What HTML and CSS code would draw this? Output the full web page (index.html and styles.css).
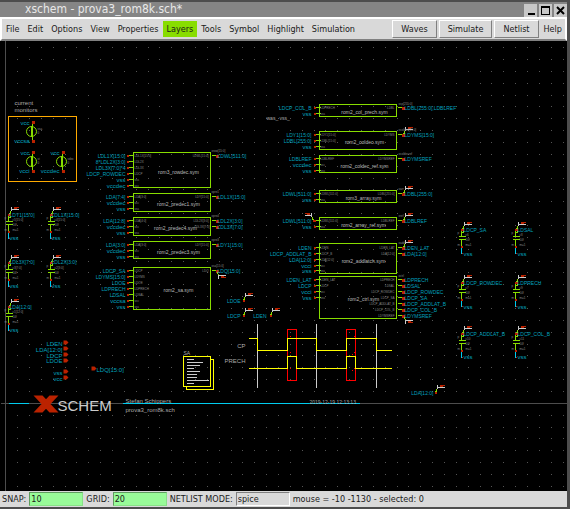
FILE: index.html
```html
<!DOCTYPE html>
<html lang="en">
<head>
<meta charset="utf-8">
<title>xschem - prova3_rom8k.sch*</title>
<link rel="stylesheet" href="styles.css">
</head>
<body>
<header class="titlebar">
  <h1 class="title">xschem - prova3_rom8k.sch*</h1>
  <div class="controls">
    <button class="control" type="button" aria-label="Minimize"><svg class="glyph" viewBox="0 0 13 13"><path d="M4 10h7" stroke-width="2"/></svg></button>
    <button class="control" type="button" aria-label="Maximize"><svg class="glyph" viewBox="0 0 13 13"><path d="M2.500 3v7.500h8V3"/><path d="M2 3h9" stroke-width="2"/></svg></button>
    <button class="control" type="button" aria-label="Close"><svg class="glyph glyph-x" viewBox="0 0 13 13"><path d="M3 3l7 7M10 3l-7 7" stroke-width="2"/></svg></button>
  </div>
</header>
<nav class="menubar">
  <button class="menu" type="button">File</button>
  <button class="menu" type="button">Edit</button>
  <button class="menu" type="button">Options</button>
  <button class="menu" type="button">View</button>
  <button class="menu" type="button">Properties</button>
  <button class="menu layers" type="button">Layers</button>
  <button class="menu" type="button">Tools</button>
  <button class="menu" type="button">Symbol</button>
  <button class="menu" type="button">Highlight</button>
  <button class="menu" type="button">Simulation</button>
  <span class="spacer"></span>
  <button class="action" type="button">Waves</button>
  <button class="action" type="button">Simulate</button>
  <button class="action" type="button">Netlist</button>
  <button class="menu help" type="button">Help</button>
</nav>
<main class="canvas">
<svg class="sheet" role="img" aria-label="Schematic">
  <defs>
    <pattern id="grid" x="17" y="6" width="83" height="83" patternUnits="userSpaceOnUse">
      <path class="dots" d="M0 .5h83M0 12.500h83M0 24.500h83M0 36.500h83M0 48.500h83M0 59.500h83M0 71.500h83"/>
    </pattern>
    <g id="in"><path class="wire" d="M0 0h5"/><rect class="pin" x="-2" y="-1" width="2" height="2"/></g>
    <g id="out"><path class="wire" d="M0 0h4"/><rect class="pin" x="4" y="-1" width="3" height="3"/></g>
    <g id="flag"><path class="wire" d="M0 0v-1h1v-2l2-2"/><path class="tick" d="M2-8v4M2-5h7"/><path class="pinline" d="M4-6h3M4-7h5"/><rect class="pin" x="-1" y="-1" width="2" height="2"/></g>
    <g id="cap">
      <use href="#flag"/>
      <path class="wire" d="M-1 0v7M-4 7h7M-4 10h7M-1 10v7M1 1v2h-2"/>
      <path class="net" d="M-1 18v6"/>
      <path class="pinline" d="M-1 24h1"/>
      <rect class="pin" x="-2" y="-1" width="2" height="2"/><rect class="pin" x="-2" y="16" width="2" height="2"/>
      <g class="tiny"><text x="-5" y="4">p</text><text x="-5" y="16">m</text><text x="3" y="11">50f</text><text x="3" y="16">m=1</text></g>
    </g>
    <g id="source">
      <circle class="wire smooth" cx="-1" cy="9" r="5"/><path class="wire" d="M0 0v18M-1 3v11"/>
      <rect class="pin" x="-1" y="-2" width="3" height="3"/><rect class="pin" x="-1" y="17" width="3" height="3"/>
      <g class="tiny"><text x="5" y="11">0</text></g>
    </g>
    <path id="port" class="pin smooth" d="M0-2h3l2 2-2 2H0z"/>
  </defs>
  <rect x="0" y="0" width="100%" height="100%" fill="url(#grid)"/>
  <g transform="translate(.5 -40.500)">
    <!-- sheet axes and title block -->
    <path class="axis" d="M5 0v2000M0 403h4000"/>
    <path class="net" d="M8 403h20M122 403h237"/>
    <path class="emblem" d="M33 395h9l16 17h-9zM49 395h9l-16 17h-9z"/>
    <text class="brand" x="57" y="410">SCHEM</text>
    <g class="note">
      <text x="125" y="402">Stefan Schippers</text>
      <text x="125" y="411">prova3_rom8k.sch</text>
      <text x="14" y="104">current</text>
      <text x="14" y="111">monitors</text>
      <text x="183" y="354" class="small">SA</text>
      <text x="309" y="403" class="small">2019-12-19 12:13:13</text>
      <text x="266" y="119" class="small">was_ vss_</text>
      <text x="245" y="347" class="end">CP</text>
      <text x="245" y="362" class="end">PRECH</text>
    </g>

    <!-- current monitors -->
    <rect class="frame" x="8" y="116" width="68" height="65"/>
    <use href="#source" x="32" y="122"/><use href="#source" x="32" y="152"/><use href="#source" x="62" y="152"/>
    <g class="label large end">
      <text x="29" y="124">vcc</text><text x="29" y="142">vccsa</text>
      <text x="29" y="154">vcc</text><text x="29" y="172">vcci</text>
      <text x="59" y="154">vcc</text><text x="59" y="172">vccdec</text>
    </g>
    <g class="tiny"><text x="37" y="129">vsa</text><text x="37" y="159">vi</text><text x="67" y="159">vdec</text></g>

    <!-- row decoder, predecoders and sense amplifier -->
    <path class="wire" d="M133 152h77v35h-77zM133 193h77v18h-77zM133 217h77v18h-77zM133 241h77v17h-77zM133 267h77v42h-77z"/>
    <use href="#in" x="128" y="155"/><use href="#in" x="128" y="161"/><use href="#in" x="128" y="167"/><use href="#in" x="128" y="173"/><use href="#in" x="128" y="179"/><use href="#in" x="128" y="185"/>
    <use href="#in" x="128" y="196"/><use href="#in" x="128" y="202"/><use href="#in" x="128" y="208"/>
    <use href="#in" x="128" y="220"/><use href="#in" x="128" y="226"/><use href="#in" x="128" y="232"/>
    <use href="#in" x="128" y="244"/><use href="#in" x="128" y="250"/><use href="#in" x="128" y="256"/>
    <use href="#in" x="128" y="270"/><use href="#in" x="128" y="276"/><use href="#in" x="128" y="282"/><use href="#in" x="128" y="288"/><use href="#in" x="128" y="294"/><use href="#in" x="128" y="300"/><use href="#in" x="128" y="306"/>
    <use href="#out" x="211" y="155"/><use href="#out" x="211" y="196"/><use href="#out" x="211" y="220"/><use href="#out" x="211" y="226"/><use href="#out" x="211" y="244"/><use href="#out" x="211" y="270"/>
    <use href="#flag" transform="translate(216 270) scale(1 -1)"/>
    <g class="label end">
      <text x="125" y="157">LDL1X[15:0]</text><text x="125" y="163">8*LDL2X[3:0]</text><text x="125" y="169">LDL3X[7:0]*4</text><text x="125" y="175">LDCP_ROWDEC</text>
      <text x="125" y="198">LDA[7:4]</text><text x="125" y="222">LDA[12:8]</text><text x="125" y="246">LDA[3:0]</text>
      <text x="125" y="272">LDCP_SA</text><text x="125" y="278">LDYMS[15:0]</text><text x="125" y="284">LDOE</text><text x="125" y="290">LDPRECH</text><text x="125" y="296">LDSAL</text>
    </g>
    <g class="label large end">
      <text x="125" y="181">vss</text><text x="125" y="187">vccdec</text>
      <text x="125" y="204">vccdec</text><text x="125" y="210">vss</text>
      <text x="125" y="228">vccdec</text><text x="125" y="234">vss</text>
      <text x="125" y="252">vccdec</text><text x="125" y="258">vss</text>
      <text x="125" y="302">vccsa</text><text x="125" y="308">vss</text>
    </g>
    <g class="label">
      <text x="217" y="157">LDWL[511:0]</text><text x="217" y="198">LDL1X[15:0]</text><text x="217" y="222">LDL2X[3:0]</text><text x="217" y="228">LDL3X[7:0]</text><text x="217" y="246">LDY1[15:0]</text><text x="217" y="272">LDQ[15:0]</text>
    </g>
    <g class="cell">
      <text x="178" y="173">rom3_rowdec.sym</text><text x="178" y="205">rom2_predec1.sym</text><text x="175" y="229">rom2_predec4.sym</text><text x="178" y="253">rom2_predec3.sym</text><text x="178" y="291">rom2_sa.sym</text>
    </g>
    <g class="tiny">
      <text x="134" y="156">LDL1X[15:0]</text><text x="134" y="162">LDL2X</text><text x="134" y="168">LDL3X</text><text x="134" y="174">LDCP</text><text x="134" y="180">vss</text><text x="134" y="186">vcc</text>
      <text x="134" y="197">LDA[3:0]</text><text x="134" y="203">vcc</text><text x="134" y="209">vss</text>
      <text x="134" y="221">LDA[4:0]</text><text x="134" y="227">vcc</text><text x="134" y="233">vss</text>
      <text x="134" y="245">LDA[3:0]</text><text x="134" y="251">vcc</text><text x="134" y="257">vss</text>
      <text x="134" y="271">LDCP</text><text x="134" y="277">LDYMS</text><text x="134" y="283">LDOE</text><text x="134" y="289">LDPRECH</text><text x="134" y="295">LDSAL</text><text x="134" y="301">vcc</text><text x="134" y="307">vss</text>
      <text x="211" y="151">xrow[15:0]</text><text x="211" y="192">xpre1</text><text x="211" y="216">xpre4</text><text x="211" y="240">xpre3</text><text x="211" y="266">xsa[15:0]</text>
    </g>
    <g class="tiny end">
      <text x="208" y="156">LDWL[15:0]</text><text x="208" y="197">LDY[15:0]</text><text x="208" y="221">LDL2X[3:0]</text><text x="209" y="227">LDL3X[7:0]</text><text x="208" y="245">LDY[15:0]</text><text x="208" y="271">LDQ</text>
    </g>

    <!-- column path, array and control -->
    <path class="wire" d="M319 104h77v12h-77zM319 131h77v18h-77zM319 155h77v17h-77zM319 190h77v12h-77zM319 217h77v12h-77zM319 243h77v30h-77zM319 276h77v42h-77z"/>
    <use href="#in" x="315" y="107"/><use href="#in" x="315" y="113"/>
    <use href="#in" x="315" y="134"/><use href="#in" x="315" y="140"/><use href="#in" x="315" y="146"/>
    <use href="#in" x="315" y="158"/><use href="#in" x="315" y="164"/><use href="#in" x="315" y="170"/>
    <use href="#in" x="315" y="193"/><use href="#in" x="315" y="199"/>
    <use href="#in" x="315" y="220"/><use href="#in" x="315" y="226"/>
    <use href="#in" x="315" y="247"/><use href="#in" x="315" y="253"/><use href="#in" x="315" y="259"/><use href="#in" x="315" y="265"/><use href="#in" x="315" y="270"/>
    <use href="#in" x="315" y="279"/><use href="#in" x="315" y="285"/><use href="#in" x="315" y="291"/><use href="#in" x="315" y="297"/>
    <use href="#out" x="397" y="107"/><use href="#out" x="397" y="134"/><use href="#out" x="397" y="158"/><use href="#out" x="397" y="193"/><use href="#out" x="397" y="220"/><use href="#out" x="397" y="247"/><use href="#out" x="397" y="253"/>
    <use href="#out" x="397" y="279"/><use href="#out" x="397" y="285"/><use href="#out" x="397" y="291"/><use href="#out" x="397" y="297"/><use href="#out" x="397" y="303"/><use href="#out" x="397" y="309"/><use href="#out" x="397" y="315"/>
    <use href="#flag" x="403" y="134"/><use href="#flag" x="403" y="193"/><use href="#flag" x="403" y="220"/><use href="#flag" x="403" y="247"/>
    <use href="#flag" transform="translate(403 315) scale(1 -1)"/><use href="#flag" transform="translate(313 220) scale(-1 1)"/>
    <g class="label end">
      <text x="311" y="109">LDCP_COL_B</text>
      <text x="311" y="136">LDY1[15:0]</text><text x="311" y="142">LDBL[255:0]</text>
      <text x="311" y="160">LDBLREF</text><text x="311" y="195">LDWL[511:0]</text><text x="311" y="222">LDWL[511:0]</text>
      <text x="311" y="249">LDEN</text><text x="311" y="255">LDCP_ADDLAT_B</text><text x="311" y="261">LDA[12:0]</text>
      <text x="311" y="281">LDEN_LAT</text><text x="311" y="287">LDCP</text>
    </g>
    <g class="label large end">
      <text x="311" y="115">vss</text><text x="311" y="148">vss</text><text x="311" y="166">vccdec</text><text x="311" y="172">vss</text><text x="311" y="201">vss</text><text x="311" y="228">vss</text><text x="311" y="267">vcci</text><text x="311" y="272">vss</text><text x="311" y="293">vcci</text><text x="311" y="299">vss</text>
    </g>
    <g class="label">
      <text x="404" y="109">LDBL[255:0],LDBLREF</text><text x="404" y="136">LDYMS[15:0]</text><text x="404" y="160">LDYMSREF</text><text x="404" y="195">LDBL[255:0]</text><text x="404" y="222">LDBLREF</text>
      <text x="404" y="249">LDEN_LAT</text><text x="404" y="255">LDA[12:0]</text>
      <text x="404" y="281">LDPRECH</text><text x="404" y="287">LDSAL</text><text x="404" y="293">LDCP_ROWDEC</text><text x="404" y="299">LDCP_SA</text><text x="404" y="305">LDCP_ADDLAT_B</text><text x="404" y="311">LDCP_COL_B</text><text x="404" y="317">LDYMSREF</text>
    </g>
    <g class="cell">
      <text x="364" y="113">rom2_col_prech.sym</text><text x="364" y="143">rom2_coldec.sym</text><text x="364" y="167">rom2_coldec_ref.sym</text><text x="363" y="199">rom3_array.sym</text><text x="363" y="226">rom2_array_ref.sym</text><text x="363" y="262">rom2_addlatch.sym</text><text x="363" y="300">rom2_ctrl.sym</text>
    </g>
    <g class="tiny">
      <text x="320" y="108">LDPRECH</text><text x="320" y="114">vss</text>
      <text x="320" y="135">LDY1[15:0]</text><text x="320" y="141">LDBL[15:0]</text><text x="320" y="147">vss</text>
      <text x="320" y="159">LDBLREF</text><text x="320" y="165">vcc</text><text x="320" y="171">vss</text>
      <text x="320" y="194">LDWL[511:0]</text><text x="320" y="200">vss</text>
      <text x="320" y="221">LDWL[511:0]</text><text x="320" y="227">vss</text>
      <text x="320" y="248">LDEN</text><text x="320" y="254">LDCP_B</text><text x="320" y="260">LDA[12:0]</text><text x="320" y="266">vcc</text><text x="320" y="271">vss</text>
      <text x="320" y="280">LDEN_LAT</text><text x="320" y="286">LDCP</text><text x="320" y="292">vcc</text><text x="320" y="298">vss</text>
      <text x="398" y="104">xcp[255:0]</text><text x="398" y="130">xcoldec[15:0]</text><text x="398" y="154">xcoldecref</text><text x="398" y="189">xarr</text><text x="398" y="216">xref</text><text x="398" y="243">xadd</text><text x="398" y="276">xctrl</text>
    </g>
    <g class="tiny end">
      <text x="394" y="108">LDBL</text><text x="394" y="135">LDYMS</text><text x="394" y="159">LDYMSREF</text><text x="394" y="194">LDBL[255:0]</text><text x="394" y="221">LDBLREF</text><text x="394" y="248">LDEN_LAT</text><text x="394" y="254">LDA[12:0]</text>
      <text x="394" y="280">LDPRECH</text><text x="394" y="286">LDSAL</text><text x="394" y="292">LDCP_ROWDEC</text><text x="394" y="298">LDCP_SA</text><text x="394" y="304">LDCP_ADDLAT_B</text><text x="394" y="310">LDCP_COL_B</text><text x="394" y="316">LDYMSREF</text>
    </g>

    <!-- load capacitors -->
    <use href="#cap" x="9" y="214"/><use href="#cap" x="51" y="214"/><use href="#cap" x="9" y="262"/><use href="#cap" x="51" y="262"/><use href="#cap" x="9" y="306"/>
    <use href="#cap" x="462" y="229"/><use href="#cap" x="516" y="229"/><use href="#cap" x="462" y="282"/><use href="#cap" x="516" y="282"/><use href="#cap" x="462" y="333"/><use href="#cap" x="516" y="333"/>
    <g class="label">
      <text x="9" y="216">LDY1[15:0]</text><text x="51" y="216">LDL1X[15:0]</text><text x="9" y="263">LDL3X[7:0]</text><text x="51" y="263">LDL2X[3:0]</text><text x="9" y="308">LDA[12:0]</text>
      <text x="463" y="231">LDCP_SA</text><text x="517" y="231">LDSAL</text><text x="463" y="284">LDCP_ROWDEC</text><text x="517" y="284">LDPRECH</text><text x="463" y="335">LDCP_ADDLAT_B</text><text x="517" y="335">LDCP_COL_B</text>
    </g>
    <g class="label large">
      <text x="9" y="239">vss</text><text x="51" y="239">vss</text><text x="9" y="287">vss</text><text x="51" y="287">vss</text><text x="9" y="331">vss</text>
      <text x="463" y="255">vss</text><text x="517" y="255">vss</text><text x="463" y="308">vss</text><text x="517" y="308">vss</text><text x="463" y="358">vss</text><text x="517" y="358">vss</text>
    </g>
    <g class="tiny">
      <text x="12" y="220">c5[15:0]</text><text x="54" y="220">c4[15:0]</text><text x="12" y="268">c3[7:0]</text><text x="54" y="268">c2[3:0]</text><text x="12" y="312">c1[12:0]</text>
      <text x="465" y="235">c6</text><text x="519" y="235">c8</text><text x="465" y="288">c7</text><text x="519" y="288">c9</text><text x="465" y="339">c10</text><text x="519" y="339">c11</text>
    </g>

    <!-- probes and ports -->
    <use href="#flag" x="243" y="300"/><use href="#flag" x="243" y="315"/><use href="#flag" x="270" y="315"/><use href="#flag" x="435" y="392"/>
    <g class="label end">
      <text x="240" y="302">LDOE</text><text x="240" y="317">LDCP</text><text x="266" y="317">LDEN</text><text x="433" y="394">LDA[12:0]</text>
    </g>
    <use href="#port" x="63" y="342"/><use href="#port" x="63" y="348"/><use href="#port" x="63" y="354"/><use href="#port" x="63" y="360"/><use href="#port" x="63" y="371"/><use href="#port" x="63" y="377"/>
    <use href="#port" x="91" y="368"/>
    <g class="label large end">
      <text x="62" y="345">LDEN</text><text x="62" y="351">LDA[12:0]</text><text x="62" y="357">LDCP</text><text x="62" y="362">LDOE</text><text x="62" y="374">vss</text><text x="62" y="380">vcc</text>
    </g>
    <g class="label large"><text x="96" y="371">LDQ[15:0]</text></g>

    <!-- launcher document -->
    <path class="signal" d="M183 356h27v30h-27zM210 359h3v30h-27v-3"/>
    <path class="tick" d="M186 359h7M186 362h16M186 365h13M186 368h7M186 371h13M186 374h10M186 377h10M186 380h22M186 383h7"/>

    <!-- timing diagram -->
    <path class="tick" d="M257 323v64M316 323v64M376 323v64"/>
    <path class="window" d="M287 329h9v51h-9zM346 329h9v51h-9z"/>
    <path class="window" d="M289 336h1M295 347h1M289 352h1M295 362h1M289 368h1M295 378h1M353 336h1M353 352h1M351 354h1M353 368h1M351 370h1"/>
    <path class="signal" d="M248 338h9v12h30v-12h29v12h30v-12h30v12h15"/>
    <path class="signal" d="M248 368h39v-12h9v12h50v-12h9v12h36"/>
  </g>
</svg>
</main>
<footer class="status">
  <label for="snap">SNAP:</label><input class="field" id="snap" value="10">
  <label for="gridsize">GRID:</label><input class="field" id="gridsize" value="20">
  <label for="mode">NETLIST MODE:</label><input class="field mode" id="mode" value="spice">
  <output>mouse = -10 -1130 - selected: 0</output>
</footer>
</body>
</html>
```
FILE: styles.css
```css
* { box-sizing: border-box; }

body {
  margin: 0;
  height: 100vh;
  display: flex;
  flex-direction: column;
  border: solid #4d4d4d;
  border-width: 2px 3px 2px 0;
  background: #000;
  color: #1a1a1a;
  font: 9px/12px "DejaVu Sans Condensed", "DejaVu Sans", sans-serif;
}

button, input {
  font: inherit;
  color: inherit;
  margin: 0;
  border: 0;
}

.titlebar {
  display: flex;
  align-items: flex-end;
  justify-content: space-between;
  height: 15px;
  background: #858585;
}
.title {
  margin: 0;
  padding-left: 25px;
  color: #e8e8e8;
  font-size: 12px;
  font-weight: normal;
  line-height: 15px;
}
.controls { display: flex; gap: 2px; }
.control {
  width: 13px;
  height: 13px;
  padding: 0;
  background: #c8c8c8;
}
.glyph {
  display: block;
  width: 13px;
  height: 13px;
  fill: none;
  stroke: #000;
  shape-rendering: crispEdges;
}
.glyph-x { shape-rendering: auto; }

.menubar {
  display: flex;
  align-items: center;
  height: 24px;
  border: solid #fff;
  border-width: 2px 2px 0 2px;
  border-bottom: 2px solid #808080;
  background: #d9d9d9;
}
.menu {
  height: 16px;
  padding: 0 4px;
  background: none;
}
.layers { background: #88dd00; }
.help { padding: 0 3px; }
.spacer { flex: 1; }
.action {
  height: 18px;
  margin-right: 2px;
  padding: 0 8px;
  background: #d9d9d9;
  border: 1px solid;
  border-color: #fff #808080 #808080 #fff;
}

.canvas { flex: 1; min-height: 0; background: #000; }
.sheet {
  display: block;
  width: 100%;
  height: 100%;
  fill: none;
  shape-rendering: crispEdges;
  font-family: "Liberation Sans", Arial, sans-serif;
}
.dots { stroke: #555; stroke-dasharray: 1 11 1 11 1 11 1 11 1 10 1 11 1 11; }
.axis { stroke: #4d4d4d; }
.net { stroke: #00ccee; }
.wire { stroke: #88dd00; }
.smooth { shape-rendering: auto; }
.tick { stroke: #ccc; }
.pin { fill: #bb2200; }
.pinline { stroke: #bb2200; }
.frame { stroke: #ffaa00; }
.signal { stroke: #ffff00; }
.window { stroke: #ff0000; }
.emblem { fill: #bb2200; shape-rendering: auto; }
.brand { fill: #ccc; font-size: 15px; }
.note { fill: #aaa; font-size: 6px; }
.label { fill: #00a0bf; font-size: 5px; }
.large { font-size: 6px; }
.small { font-size: 5px; }
.cell { fill: #bbb; font-size: 5px; text-anchor: middle; }
.tiny { fill: #888; font-size: 3px; }
.end { text-anchor: end; }

.status {
  display: flex;
  align-items: center;
  gap: 3px;
  height: 16px;
  padding-left: 2px;
  background: #d9d9d9;
  white-space: nowrap;
}
.field {
  width: 54px;
  height: 14px;
  padding: 0 1px;
  background: #98fb98;
  border: 1px solid;
  border-color: #5f9c5f #88e088 #88e088 #5f9c5f;
}
.mode {
  background: #d9d9d9;
  border-color: #808080 #fff #fff #808080;
}
```
